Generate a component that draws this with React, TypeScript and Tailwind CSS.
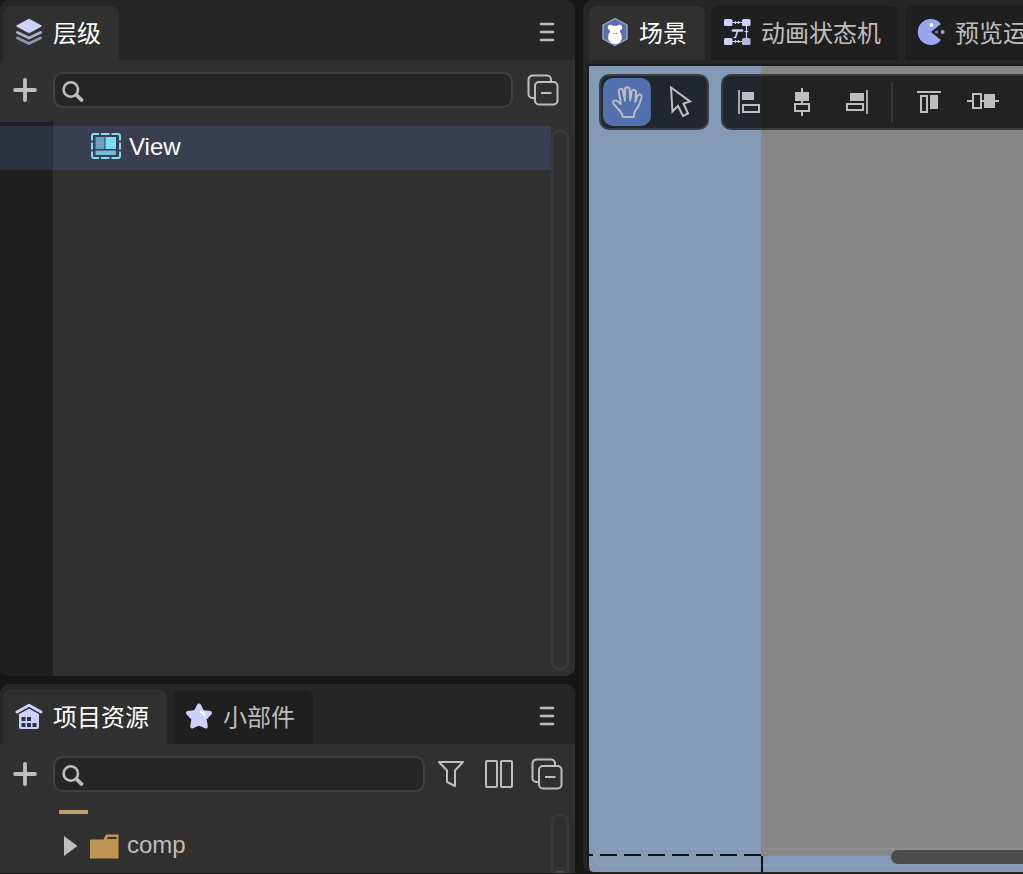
import React from "react";

type IconProps = { className?: string };

function LayersIcon() {
  return (
    <svg width="28" height="28" viewBox="0 0 28 28" className="shrink-0" aria-hidden="true">
      <path d="M2.500 20 14 25.500 25.500 20" fill="none" stroke="#8d94ab" strokeWidth="3" strokeLinecap="round" strokeLinejoin="round" />
      <path d="M2.500 14.500 14 20 25.500 14.500" fill="none" stroke="#a9afd0" strokeWidth="3" strokeLinecap="round" strokeLinejoin="round" />
      <path d="M13 0.800q1-.5 2 0L26.500 7q1.300 1 0 2L15 15.200q-1 .5-2 0L1.500 9q-1.300-1 0-2z" fill="#cdd2fb" stroke="#303030" strokeWidth="0.800" />
    </svg>
  );
}

function HouseIcon() {
  return (
    <svg width="28" height="28" viewBox="0 0 28 28" className="shrink-0" aria-hidden="true">
      <path d="M2 10 14 3.200 26 10" fill="none" stroke="#cdd2fb" strokeWidth="3" strokeLinecap="round" strokeLinejoin="round" />
      <path d="M4 12 14 6.500 24 12V25q0 2-2 2H6q-2 0-2-2z" fill="#cdd2fb" />
      <path d="M2.500 12.200 14 5.800 25.500 12.200" fill="none" stroke="#303030" strokeWidth="1" />
      <g fill="#303045">
        <path d="M6.500 15h4v4h-4zM12 15h4v4h-4zM6.500 21h4v4h-4zM12 21h4v4h-4zM17.500 21h4v4h-4z" />
      </g>
    </svg>
  );
}

function StarIcon() {
  return (
    <svg width="28" height="28" viewBox="0 0 28 28" className="shrink-0" aria-hidden="true">
      <path
        d="M14 3.500 17.300 9.900 25 11 19.600 16.800 20.800 24.500 14 21.500 7.200 24.500 8.400 16.800 3 11 10.700 9.900Z"
        fill="#cdd2fb"
        stroke="#cdd2fb"
        strokeWidth="4"
        strokeLinejoin="round"
      />
      <path d="M15.500 10q3 .5 4 3.500" fill="none" stroke="#fff" strokeWidth="2.200" strokeLinecap="round" />
    </svg>
  );
}

function ApeIcon() {
  return (
    <svg width="28" height="30" viewBox="0 0 28 30" className="shrink-0" aria-hidden="true">
      <path d="M14 1.500 26 8v14l-12 6.500L2 22V8z" fill="#5a6eb0" stroke="#9fa6b8" strokeWidth="1.400" strokeLinejoin="round" />
      <circle cx="9.600" cy="10.500" r="2.800" fill="#fff" />
      <circle cx="18.400" cy="10.500" r="2.800" fill="#fff" />
      <ellipse cx="14" cy="13.500" rx="5.200" ry="4.800" fill="#fff" />
      <circle cx="14" cy="20" r="7" fill="#fff" />
      <path d="M11.800 16.500h1.600M14.600 16.500h1.600" stroke="#5a6eb0" strokeWidth="0.900" />
    </svg>
  );
}

function StateMachineIcon() {
  return (
    <svg width="28" height="28" viewBox="0 0 28 28" className="shrink-0" aria-hidden="true">
      <g fill="#cdd2fb">
        <rect x="1" y="1" width="8.500" height="7" rx="1.500" />
        <rect x="19" y="1" width="8.500" height="7" rx="1.500" />
        <rect x="1" y="20" width="8.500" height="7" rx="1.500" />
        <rect x="19" y="20" width="8.500" height="7" rx="1.500" fill="#b4b9dc" />
      </g>
      <g fill="none" stroke="#cdd2fb">
        <path d="M9 4.500h10M9 23.500h10M23.500 8v12" strokeWidth="1.200" />
        <path d="M12.500 3v3M15.500 3v3M12.500 22v3M15.500 22v3M21.500 13.500h4" strokeWidth="1.200" />
        <path d="M10 12.500h9" strokeWidth="2.600" strokeLinecap="round" />
        <path d="m14.500 13-2 6.500h-2" strokeWidth="1.600" />
      </g>
    </svg>
  );
}

function PacIcon() {
  return (
    <svg width="28" height="28" viewBox="0 0 28 28" className="shrink-0" aria-hidden="true">
      <path d="M14 14 24 6A13 13 0 1 0 24 22Z" fill="#98a6ee" />
      <circle cx="14.500" cy="7" r="1.900" fill="#fff" />
      <circle cx="19.700" cy="14" r="1.800" fill="#68769d" />
      <circle cx="25.700" cy="14" r="1.900" fill="#98a6ee" />
    </svg>
  );
}

function MenuIcon() {
  return (
    <svg width="16" height="20" viewBox="0 0 16 20" aria-hidden="true">
      <path d="M2 2h12M2 10h12M2 18h12" stroke="#bebebe" strokeWidth="2.700" strokeLinecap="round" />
    </svg>
  );
}

function PlusIcon() {
  return (
    <svg width="24" height="24" viewBox="0 0 24 24" aria-hidden="true">
      <path d="M12 2v20M2 12h20" stroke="#bebebe" strokeWidth="3.800" strokeLinecap="round" />
    </svg>
  );
}

function SearchIcon({ className }: IconProps) {
  return (
    <svg width="24" height="26" viewBox="0 -2 24 26" className={className} aria-hidden="true">
      <circle cx="9.800" cy="10.500" r="7.200" fill="none" stroke="#bebebe" strokeWidth="2.600" />
      <path d="m15.500 16 5 5" stroke="#bebebe" strokeWidth="3.800" strokeLinecap="round" />
    </svg>
  );
}

function CollapseIcon() {
  return (
    <svg width="32" height="32" viewBox="0 0 32 32" aria-hidden="true">
      <g fill="none" stroke="#bebebe" strokeWidth="2">
        <path d="M24 7V5.500a4 4 0 0 0-4-4H5.500a4 4 0 0 0-4 4V20a4 4 0 0 0 4 4H7" />
        <rect x="8" y="8" width="22.500" height="22.500" rx="4" />
        <path d="M14 19h10.500" />
      </g>
    </svg>
  );
}

function FilterIcon() {
  return (
    <svg width="28" height="28" viewBox="0 0 28 28" aria-hidden="true">
      <path d="M2 2h24l-8 8.500V26l-8-4V10.500z" fill="none" stroke="#bebebe" strokeWidth="2" strokeLinejoin="round" />
    </svg>
  );
}

function ColumnsIcon() {
  return (
    <svg width="28" height="28" viewBox="0 0 28 28" aria-hidden="true">
      <rect x="1" y="1" width="11" height="26" rx="1" fill="none" stroke="#bebebe" strokeWidth="2" />
      <rect x="16" y="1" width="11" height="26" rx="1" fill="none" stroke="#bebebe" strokeWidth="2" />
    </svg>
  );
}

function ViewIcon() {
  return (
    <svg width="30" height="26" viewBox="0 0 30 26" className="mb-0.5 shrink-0" aria-hidden="true">
      <path
        d="M1 7.500V3q0-2 2-2h5M10 1h8.500M20.500 1H27q2 0 2 2v4.500M29 9.500v7M29 18.500V23q0 2-2 2h-6.500M18.500 25H10M8 25H3q-2 0-2-2v-4.500M1 16.500v-7"
        fill="none"
        stroke="#7fdcf8"
        strokeWidth="2"
      />
      <rect x="4.500" y="4" width="9" height="12" fill="#6b9fbd" />
      <rect x="14.500" y="4" width="10.500" height="12" fill="#7fdcf8" />
      <rect x="4.500" y="17.500" width="20.500" height="4.500" fill="#72bcd8" />
    </svg>
  );
}

function FolderIcon() {
  return (
    <svg width="29" height="25" viewBox="0 0 29 25" className="shrink-0" aria-hidden="true">
      <path d="M0 5.500h13.500L16 0.500h12.500V24.500H0z" fill="#bf9551" />
      <path d="M18 3h8.500v2H17z" fill="#303030" />
    </svg>
  );
}

function HandIcon() {
  return (
    <svg width="32" height="34" viewBox="-1 0 32 34" aria-hidden="true">
      <path
        d="M11 32h10.800l.7-4.500c1-3 4.500-6 5.500-10l1.500-5.500c.6-2.800-3-3.600-4-1l-2.300 6 .8-9.500c.2-3.200-4-3.600-4.500-.5l-1.300 8.500-.5-11c-.3-3-4.600-3-4.700.2l-.1 11L11 5.500c-.8-2.800-4.800-2-4.300 1L9 19l-3.800-3c-2.500-1.700-5.400.8-3.400 3.200L7.500 25.500c1.800 2 2.800 4 3.500 6.500Z"
        fill="none"
        stroke="#bebebe"
        strokeWidth="1.900"
        strokeLinejoin="round"
      />
    </svg>
  );
}

function PointerIcon() {
  return (
    <svg width="24" height="34" viewBox="0 0 24 34" aria-hidden="true">
      <path d="M2 2.500 21 16.500 14.500 18.500 19 28.500 14 31 9 21 3.500 26.500Z" fill="none" stroke="#bebebe" strokeWidth="2" />
    </svg>
  );
}

function AlignLeftIcon() {
  return (
    <svg width="24" height="28" viewBox="0 0 24 28" aria-hidden="true">
      <path d="M2 2v24" stroke="#a8a8a8" strokeWidth="2" />
      <rect x="5" y="4" width="12" height="8" fill="#bebebe" />
      <rect x="6" y="17" width="16" height="7" fill="none" stroke="#bebebe" strokeWidth="2" />
    </svg>
  );
}

function AlignCenterIcon() {
  return (
    <svg width="24" height="28" viewBox="1 0 24 28" aria-hidden="true">
      <path d="M12 0v16M12 24v4" stroke="#bebebe" strokeWidth="2" />
      <rect x="5" y="4" width="14" height="9" fill="#bebebe" />
      <rect x="5" y="16" width="14" height="7" fill="none" stroke="#bebebe" strokeWidth="2" />
    </svg>
  );
}

function AlignRightIcon() {
  return (
    <svg width="24" height="28" viewBox="0 0 24 28" aria-hidden="true">
      <path d="M22 2v24" stroke="#a8a8a8" strokeWidth="2" />
      <rect x="5" y="5" width="14" height="8" fill="#bebebe" />
      <rect x="2" y="16" width="16" height="6" fill="none" stroke="#bebebe" strokeWidth="2" />
    </svg>
  );
}

function AlignTopIcon() {
  return (
    <svg width="28" height="24" viewBox="0 0 28 24" aria-hidden="true">
      <path d="M2 2h24" stroke="#bebebe" strokeWidth="2" />
      <rect x="6" y="6" width="6" height="16" fill="none" stroke="#bebebe" strokeWidth="2" />
      <rect x="15" y="5" width="8" height="14" fill="#bebebe" />
    </svg>
  );
}

function AlignMiddleIcon() {
  return (
    <svg width="32" height="20" viewBox="0 0 32 20" aria-hidden="true">
      <path d="M0 9h5M14 9h18" stroke="#bebebe" strokeWidth="2" />
      <rect x="6" y="2" width="8" height="14" fill="none" stroke="#bebebe" strokeWidth="2" />
      <rect x="17" y="2" width="11" height="14" fill="#bebebe" />
    </svg>
  );
}

type TabProps = { icon: React.ReactNode; label: string; active?: boolean };

function Tab({ icon, label, active = false }: TabProps) {
  return (
    <button
      type="button"
      role="tab"
      aria-selected={active}
      className={
        active
          ? "flex h-[54px] shrink-0 items-center gap-2.5 whitespace-nowrap rounded-t-lg bg-[#303030] pt-0.5 pr-4.5 pl-3 text-white"
          : "flex h-[54px] shrink-0 items-center gap-2.5 whitespace-nowrap rounded-t-lg bg-[#1f1f1f] pt-0.5 pr-4.5 pl-3 text-[#bebebe]"
      }
    >
      <span className="mb-1">{icon}</span>
      <span>{label}</span>
    </button>
  );
}

function TabBar({ children, menu = false }: { children: React.ReactNode; menu?: boolean }) {
  return (
    <div className="flex h-[60px] shrink-0 items-end justify-between overflow-hidden bg-[#262626] pl-[3px]">
      <div role="tablist" className="flex gap-1.5">
        {children}
      </div>
      {menu && (
        <button type="button" aria-label="菜单" className="mr-5 mb-[18px]">
          <MenuIcon />
        </button>
      )}
    </div>
  );
}

function SearchBox({ id }: { id: string }) {
  return (
    <label
      htmlFor={id}
      className="flex h-9 min-w-0 flex-1 items-center rounded-[10px] border-2 border-[#404040] bg-[#262626] px-1.5"
    >
      <SearchIcon className="shrink-0" />
      <input id={id} type="text" aria-label="搜索" className="ml-1 w-full min-w-0 bg-transparent text-[#dddddd] outline-none" />
    </label>
  );
}

function ToolButton({ label, children }: { label: string; children: React.ReactNode }) {
  return (
    <button type="button" aria-label={label} className="flex size-12 items-center justify-center rounded-[10px]">
      {children}
    </button>
  );
}

function HierarchyPanel() {
  return (
    <section className="flex min-h-0 flex-col overflow-hidden rounded-[10px] bg-[#303030]">
      <TabBar menu>
        <Tab icon={<LayersIcon />} label="层级" active />
      </TabBar>
      <div className="mb-0.5 flex h-[60px] shrink-0 items-center pr-4 pl-[13px]">
        <button type="button" aria-label="新建" className="mr-4">
          <PlusIcon />
        </button>
        <SearchBox id="hierarchy-search" />
        <button type="button" aria-label="全部折叠" className="ml-3.5">
          <CollapseIcon />
        </button>
      </div>
      <div className="flex min-h-0 flex-1 bg-linear-to-r from-[#1f1f1f] from-[53px] to-[#303030] to-[53px]">
        <ul className="min-w-0 flex-1 pt-1">
          <li className="flex h-11 items-center gap-2 bg-linear-to-r from-[#2c3240] from-[53px] to-[#393f50] to-[53px] pb-0.5 pl-[91px] text-white">
            <ViewIcon />
            <span>View</span>
          </li>
        </ul>
        <div className="mt-2 mr-1.5 mb-1.5 w-[18px] rounded-lg border-2 border-[#393939]" />
      </div>
    </section>
  );
}

function AssetsPanel() {
  return (
    <section className="flex min-h-0 flex-col overflow-hidden rounded-t-[10px] bg-[#303030]">
      <TabBar menu>
        <Tab icon={<HouseIcon />} label="项目资源" active />
        <Tab icon={<StarIcon />} label="小部件" />
      </TabBar>
      <div className="mb-0.5 flex h-[60px] shrink-0 items-center pr-3 pl-[13px]">
        <button type="button" aria-label="新建" className="mr-4">
          <PlusIcon />
        </button>
        <SearchBox id="assets-search" />
        <div className="ml-3 flex items-center gap-5">
          <button type="button" aria-label="筛选">
            <FilterIcon />
          </button>
          <button type="button" aria-label="分栏">
            <ColumnsIcon />
          </button>
          <button type="button" aria-label="全部折叠" className="-ml-0.5">
            <CollapseIcon />
          </button>
        </div>
      </div>
      <div className="mt-1 flex min-h-0 flex-1 overflow-hidden">
        <ul className="-mt-[30px] min-w-0 flex-1 text-[#bebebe]">
          <li className="flex h-11 items-end pb-2.5 pl-[59px]">
            <div className="h-5 w-[29px] bg-[#bf9f70]" />
          </li>
          <li className="flex h-11 items-center pl-16">
            <svg width="14" height="20" viewBox="0 0 14 20" className="shrink-0" aria-hidden="true">
              <path d="M0 0 13.500 10 0 20z" fill="#bebebe" />
            </svg>
            <span className="mr-2 ml-3">
              <FolderIcon />
            </span>
            <span className="pb-0.5">comp</span>
          </li>
        </ul>
        <div className="mt-1 mr-1.5 flex w-[18px] items-end overflow-hidden rounded-t-lg border-2 border-b-0 border-[#393939] px-0.5">
          <div className="h-0.5 w-full rounded-t-full bg-[#4c4c4c]" />
        </div>
      </div>
    </section>
  );
}

function ScenePanel() {
  return (
    <section className="flex min-h-0 min-w-0 flex-col overflow-hidden rounded-l-[10px] bg-[#262626] pl-[3px]">
      <TabBar>
        <Tab icon={<ApeIcon />} label="场景" active />
        <Tab icon={<StateMachineIcon />} label="动画状态机" />
        <Tab icon={<PacIcon />} label="预览运行" />
      </TabBar>
      <div className="relative mt-1 mb-px ml-px flex-1 overflow-hidden rounded-bl-md border-t-2 border-l-2 border-[#1b1b1b] bg-[#8399b6]">
        <div className="absolute top-0 right-0 bottom-4 left-[172px] bg-[#878787]" />
        <svg className="absolute bottom-0 left-0" width="176" height="20" viewBox="0 0 176 20" aria-hidden="true">
          <path d="M0 3h172" stroke="#111" strokeWidth="2" strokeDasharray="17 7" strokeDashoffset="13" />
          <path d="M173 4v16" stroke="#111" strokeWidth="2" />
        </svg>
        <div className="absolute right-0 bottom-1.5 left-1 h-[18px] rounded-l-full border-2 border-r-0 border-white/5">
          <div className="ml-[296px] h-full rounded-l-full bg-[#4c4c4c]" />
        </div>
        <div role="toolbar" className="absolute top-2 left-2.5 flex h-14 w-[110px] items-center justify-between rounded-[10px] border-2 border-[#3a4048] bg-[#22272e] px-0.5">
          <button type="button" aria-label="移动视图" className="flex size-12 items-center justify-center rounded-[10px] bg-[#526fae]">
            <HandIcon />
          </button>
          <ToolButton label="选择">
            <PointerIcon />
          </ToolButton>
        </div>
        <div role="toolbar" className="absolute top-2 right-0 left-[132px] flex h-14 items-center overflow-hidden rounded-l-[10px] border-2 border-r-0 border-[#383b3f] bg-linear-to-r from-[#22272e] from-[38px] to-[#222222] to-[38px] pl-0.5">
          <div className="flex shrink-0 gap-1.5">
            <ToolButton label="左对齐">
              <AlignLeftIcon />
            </ToolButton>
            <ToolButton label="水平居中">
              <AlignCenterIcon />
            </ToolButton>
            <ToolButton label="右对齐">
              <AlignRightIcon />
            </ToolButton>
          </div>
          <div className="mr-3 ml-2.5 h-10 w-0.5 shrink-0 bg-[#383838]" />
          <div className="flex shrink-0 gap-1.5">
            <ToolButton label="顶对齐">
              <AlignTopIcon />
            </ToolButton>
            <ToolButton label="垂直居中">
              <AlignMiddleIcon />
            </ToolButton>
          </div>
        </div>
      </div>
    </section>
  );
}

export default function App() {
  return (
    <main className="grid h-screen grid-cols-[575fr_440fr] gap-2 overflow-hidden bg-[#171717] pb-px font-['Liberation_Sans','Noto_Sans_CJK_SC',sans-serif] text-2xl leading-8">
      <div className="grid min-h-0 min-w-0 grid-rows-[1fr_189px] gap-2">
        <HierarchyPanel />
        <AssetsPanel />
      </div>
      <ScenePanel />
    </main>
  );
}
